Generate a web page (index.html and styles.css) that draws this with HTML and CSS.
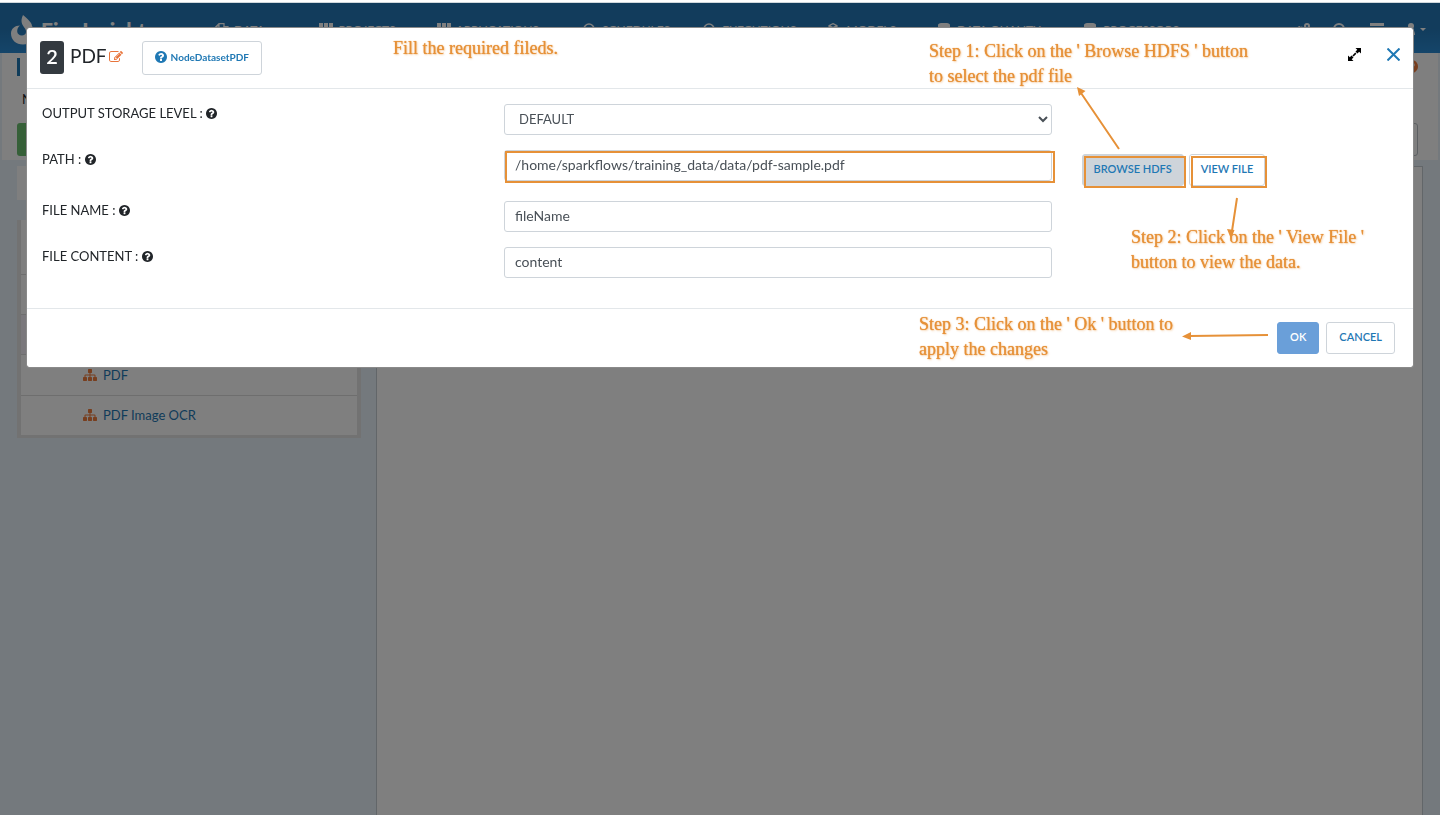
FILE: index.html
```html
<!DOCTYPE html>
<html lang="en">
<head>
<meta charset="utf-8">
<meta name="viewport" content="width=device-width, initial-scale=1">
<title>Fire Insights - PDF node</title>
<link rel="stylesheet" href="styles.css">
</head>
<body>
<svg class="sprite" aria-hidden="true">
  <symbol id="i-help" viewBox="128 128 1536 1536"><path d="M1024 1376v-192q0-14-9-23t-23-9h-192q-14 0-23 9t-9 23v192q0 14 9 23t23 9h192q14 0 23-9t9-23zm256-672q0-88-55.500-163t-138.500-116-170-41q-243 0-371 213-15 24 8 42l132 100q7 6 19 6 16 0 25-12 53-68 86-92 34-24 86-24 48 0 85.500 26t37.500 59q0 38-20 61t-68 45q-63 28-115.500 86.500t-52.500 125.500v36q0 14 9 23t23 9h192q14 0 23-9t9-23q0-19 21.500-49.500t54.500-49.500q32-18 49-28.500t46-35 44.500-48 28-60.500 12.500-81zm384 192q0 209-103 385.500t-279.500 279.500-385.500 103-385.500-103-279.500-279.500-103-385.500 103-385.500 279.500-279.500 385.500-103 385.500 103 279.500 279.500 103 385.500z"/></symbol>
  <symbol id="i-sitemap" viewBox="0 128 1792 1536"><path d="M1792 1248v320q0 40-28 68t-68 28h-320q-40 0-68-28t-28-68v-320q0-40 28-68t68-28h96v-192h-512v192h96q40 0 68 28t28 68v320q0 40-28 68t-68 28h-320q-40 0-68-28t-28-68v-320q0-40 28-68t68-28h96v-192h-512v192h96q40 0 68 28t28 68v320q0 40-28 68t-68 28h-320q-40 0-68-28t-28-68v-320q0-40 28-68t68-28h96v-192q0-52 38-90t90-38h512v-192h-96q-40 0-68-28t-28-68v-320q0-40 28-68t68-28h320q40 0 68 28t28 68v320q0 40-28 68t-68 28h-96v192h512q52 0 90 38t38 90v192h96q40 0 68 28t28 68z"/></symbol>
  <symbol id="i-edit" viewBox="0 128 1792 1408"><path d="M888 1184l116-116-152-152-116 116v56h96v96h56zm440-720q-16-16-33 1l-350 350q-17 17-1 33t33-1l350-350q17-17 1-33zm80 594v190q0 119-84.500 203.500t-203.500 84.500h-832q-119 0-203.500-84.500t-84.500-203.500v-832q0-119 84.500-203.500t203.500-84.500h832q63 0 117 25 15 7 18 23 3 17-9 29l-49 49q-14 14-32 8-23-6-45-6h-832q-66 0-113 47t-47 113v832q0 66 47 113t113 47h832q66 0 113-47t47-113v-126q0-13 9-22l64-64q15-15 35-7t20 29zm-96-738l288 288-672 672h-288v-288zm444 132l-92 92-288-288 92-92q28-28 68-28t68 28l152 152q28 28 28 68t-28 68z"/></symbol>
  <symbol id="i-grid" viewBox="0 0 14 14"><path d="M0 0h4v4H0zM5 0h4v4H5zM10 0h4v4h-4zM0 5h4v4H0zM5 5h4v4H5zM10 5h4v4h-4zM0 10h4v4H0zM5 10h4v4H5zM10 10h4v4h-4z"/></symbol>
  <symbol id="i-ring" viewBox="0 0 14 14"><path fill="none" stroke="currentColor" stroke-width="1.500" d="M6 1a5 5 0 1 0 0 10a5 5 0 1 0 0-10M6 5v3h2"/></symbol>
  <symbol id="i-db" viewBox="0 0 14 14"><path d="M0 2c0-3 12-3 12 0v9c0 3-12 3-12 0z"/></symbol>
  <symbol id="i-cube" viewBox="0 0 14 14"><path fill="none" stroke="currentColor" stroke-width="1.200" d="M5 .600l4 2v4l-4 2-4-2v-4zM1 2.600l4 2 4-2M5 5v4"/></symbol>
  <symbol id="i-copy" viewBox="0 0 14 14"><path fill="none" stroke="currentColor" stroke-width="1.200" d="M4 .600h5v3h4v9H6v-3H.600V4zM4 .600V4H.600M9 3.600L6 7"/></symbol>
</svg>

<div class="app">
  <header class="topbar">
    <a class="brand" href="#">
      <svg class="flame" viewBox="0 0 24 30" aria-hidden="true"><path fill="currentColor" d="M12 0c5 4 9 8 9 11 2 3 3 5 3 8 0 6-5 10.500-12 10.500S0 25 0 18.500c0-5 4-8 9-8-4 3-4 10 2 10 4 0 5-4 3-7-3-4-5-7-2-13.500z"/></svg>
      <span>Fire Insights</span>
    </a>
    <nav class="nav">
      <a href="#"><svg><use href="#i-copy"/></svg>DATA</a>
      <a href="#"><svg><use href="#i-grid"/></svg>PROJECTS</a>
      <a href="#"><svg><use href="#i-grid"/></svg>APPLICATIONS</a>
      <a href="#"><svg><use href="#i-ring"/></svg>SCHEDULES</a>
      <a href="#"><svg><use href="#i-ring"/></svg>EXECUTIONS</a>
      <a href="#"><svg><use href="#i-cube"/></svg>MODELS</a>
      <a href="#"><svg><use href="#i-db"/></svg>DATA QUALITY</a>
      <a href="#"><svg><use href="#i-db"/></svg>PROCESSORS</a>
    </nav>
    <div class="tools">
      <svg viewBox="0 0 14 14"><g fill="none" stroke="currentColor" stroke-width="2"><circle cx="4" cy="7" r="3" stroke-dasharray="2 1"/><circle cx="11" cy="3" r="2"/></g></svg>
      <svg viewBox="0 0 14 14"><circle cx="6" cy="6" r="5" fill="none" stroke="currentColor" stroke-width="2"/></svg>
      <svg viewBox="0 0 14 14"><path d="M0 0h14v3H0zM0 5h14v3H0z"/></svg>
      <svg viewBox="0 0 20 14"><circle cx="4" cy="3" r="3"/><path d="M0 12c0-8 8-8 8 0zM13 5h6l-3 3z"/></svg>
    </div>
  </header>

  <section class="pagehead">
    <div class="headrow">
      <span class="tick"></span>
      <svg class="help-orange"><use href="#i-help"/></svg>
    </div>
    <p class="name">NAME</p>
    <div class="headrow">
      <button class="save" type="button" aria-label="Save"></button>
      <button class="plain" type="button" aria-label="Options"></button>
    </div>
  </section>

  <main class="work">
    <aside class="side">
      <div class="search"></div>
      <div class="tree">
        <div class="group g1"></div>
        <div class="group g2"></div>
        <div class="group g3"></div>
        <a class="leaf" href="#"><svg><use href="#i-sitemap"/></svg>PDF</a>
        <a class="leaf" href="#"><svg><use href="#i-sitemap"/></svg>PDF Image OCR</a>
      </div>
    </aside>
    <div class="canvas"></div>
  </main>
</div>

<div class="backdrop">
  <div class="dialog" role="dialog" aria-labelledby="title">
    <header class="dialog-head">
      <span class="badge">2</span>
      <h1 id="title">PDF</h1>
      <button class="icon-btn edit" type="button" aria-label="Rename"><svg><use href="#i-edit"/></svg></button>
      <a class="btn doc" href="#"><svg><use href="#i-help"/></svg>NodeDatasetPDF</a>
      <div class="window-btns">
        <button class="icon-btn" type="button" aria-label="Expand"><svg class="expand" viewBox="0 0 13 13"><path d="M7.500 0H13v5.500L11.200 3.700 9.400 5.500 7.500 3.600 9.300 1.800zM5.500 13H0V7.500l1.800 1.800 1.800-1.800 1.900 1.900-1.800 1.800zM5.600 6.200l1.600-1.600 1.200 1.200-2.800 2.800-1.200-1.200z"/></svg></button>
        <button class="icon-btn" type="button" aria-label="Close"><svg class="close" viewBox="0 0 13 13"><path d="M.500.500l12 12M12.500.500l-12 12"/></svg></button>
      </div>
    </header>

    <form class="fields">
      <div class="row">
        <label for="storage">OUTPUT STORAGE LEVEL : <svg><use href="#i-help"/></svg></label>
        <div><select id="storage" class="control"><option>DEFAULT</option></select></div>
      </div>
      <div class="row">
        <label for="path">PATH : <svg><use href="#i-help"/></svg></label>
        <div class="marked wide"><input id="path" class="control" type="text" value="/home/sparkflows/training_data/data/pdf-sample.pdf"></div>
        <div class="actions">
          <span class="marked"><button class="btn active" type="button">BROWSE HDFS</button></span>
          <span class="marked"><button class="btn" type="button">VIEW FILE</button></span>
        </div>
      </div>
      <div class="row">
        <label for="fname">FILE NAME : <svg><use href="#i-help"/></svg></label>
        <div><input id="fname" class="control" type="text" value="fileName"></div>
      </div>
      <div class="row">
        <label for="fcontent">FILE CONTENT : <svg><use href="#i-help"/></svg></label>
        <div><input id="fcontent" class="control" type="text" value="content"></div>
      </div>
    </form>

    <footer class="dialog-foot">
      <button class="btn ok" type="button">OK</button>
      <button class="btn" type="button">CANCEL</button>
    </footer>

    <!-- Tutorial call-outs drawn over the dialog -->
    <p class="note n0">Fill the required fileds.</p>
    <p class="note n1">Step 1: Click on the ' Browse HDFS ' button<br>to select the pdf file</p>
    <p class="note n2">Step 2: Click on the ' View File '<br>button to view the data.</p>
    <p class="note n3">Step 3: Click on the ' Ok ' button to<br>apply the changes</p>
    <svg class="arrows" viewBox="0 0 360 340" aria-hidden="true">
      <g stroke="currentColor" stroke-width="2" fill="none"><path d="M66 121L28 65M184 170l-5 33M215 307l-78 1"/></g>
      <path fill="currentColor" d="M24 59l8.500 4-6.500 5zM178 211l-4-10 7.500 1zM129 308.500l9-4.500v8z"/>
    </svg>
  </div>
</div>
</body>
</html>
```
FILE: styles.css
```css
* { box-sizing: border-box; }

body {
  margin: 0;
  font: 13px/20px Lato, "Open Sans", sans-serif;
  color: #212529;
  overflow: hidden;
}

a { color: #1f78b4; text-decoration: none; }
svg { fill: currentColor; }
.sprite { position: absolute; width: 0; height: 0; }

/* Application shell */
.app {
  min-height: 100vh;
  display: flex;
  flex-direction: column;
  background: #e9f3fa;
  border-top: 2px solid #fff;
}

.topbar {
  display: grid;
  grid-template-columns: 204px 975fr 261fr;
  align-items: start;
  height: 51px;
  padding-top: 12px;
  color: #fff;
  border-top: 1px solid #d0d8dd;
  background: linear-gradient(#2478b8 50%, #2a8bd4);
}

.brand {
  display: flex;
  gap: 6px;
  padding-left: 11px;
  color: #fff;
  font-size: 21px;
  font-weight: 900;
  line-height: 29px;
  white-space: nowrap;
}
.flame { width: 24px; height: 30px; }

.nav {
  display: grid;
  grid-template-columns: 105fr 118fr 147fr 121fr 125fr 111fr 147fr 90fr;
  padding: 8px 0 0 11px;
}
.nav a {
  display: flex;
  gap: 5px;
  color: #fff;
  font-size: 12px;
  line-height: 14px;
  white-space: nowrap;
}
.nav svg { width: 14px; height: 14px; }

.tools {
  display: flex;
  justify-content: flex-end;
  gap: 23px;
  padding: 8px 13px 0 0;
}
.tools svg { width: 14px; height: 14px; }
.tools svg:last-child { width: 20px; }

.pagehead {
  margin: 0 2px;
  padding: 5px 20px 0 15px;
  height: 107px;
  background: #fff;
}
.headrow { display: flex; justify-content: space-between; }
.tick { width: 3px; height: 18px; background: #1f78b4; }
.help-orange { width: 13px; height: 13px; margin: 2px 0; color: #f07c3c; }
.name { margin: 13px 5px 14px; }
.save, .plain { width: 60px; height: 33px; border-radius: 3px; }
.save { border: 0; background: #6cc070; }
.plain { border: 1px solid #b8bec4; background: #fff; }

.work {
  flex: 1;
  display: grid;
  grid-template-columns: 344px 1fr;
  gap: 15px;
  padding: 6px 17px 0;
}
.search { height: 34px; background: #fff; margin-bottom: 20px; }
.tree {
  border: 4px solid #e4e4e4;
  border-top: 0;
  border-bottom-width: 3px;
  background: #fff;
}
.group { border-bottom: 1px solid #ddd; height: 40px; }
.g1 { height: 55px; }
.g3 { background: #f4f0f8; }
.leaf {
  display: flex;
  align-items: center;
  gap: 6px;
  height: 40px;
  padding: 0 0 1px 62px;
  font-size: 13px;
}
.leaf + .leaf { border-top: 1px solid #ddd; }
.leaf svg { width: 14px; height: 12px; color: #f07c3c; }
.canvas { border: 1px solid #c4ccd2; border-bottom: 0; background: #fff; }

/* Dialog */
.backdrop {
  position: fixed;
  inset: 3px 0 0;
  padding: 24px 26px;
  background: rgba(0, 0, 0, .5);
}
.dialog {
  position: relative;
  background: #fff;
  border: 1px solid #8a8a8a;
  border-radius: 3px;
  background-clip: padding-box;
}

.dialog-head {
  display: flex;
  height: 61px;
  padding: 13px;
  border-bottom: 1px solid #e3e7ea;
}
.badge {
  width: 24px;
  height: 33px;
  border-radius: 3px;
  background: #343a40;
  color: #fff;
  font-size: 20px;
  font-weight: 600;
  line-height: 30px;
  text-align: center;
}
h1 {
  margin: 0 2px 0 6px;
  font-size: 19px;
  font-weight: 400;
  line-height: 30px;
}
.icon-btn { padding: 0; border: 0; background: none; color: #000; }
.icon-btn svg { display: block; width: 13px; height: 13px; }
.edit { padding-bottom: 3px; color: #e8743b; }
.icon-btn.edit svg { width: 14px; height: 11px; }
.window-btns {
  display: flex;
  gap: 26px;
  align-items: flex-start;
  margin: 7px 0 0 auto;
}
.close { stroke: #1f78b4; stroke-width: 2; }

.btn {
  height: 32px;
  padding: 0 12px 3px;
  border: 1px solid #ced4da;
  border-radius: 3px;
  background: #fff;
  color: #1f78b4;
  font: 600 11px/16px Lato, sans-serif;
  white-space: nowrap;
}
.btn.doc {
  display: flex;
  align-items: center;
  gap: 4px;
  height: 34px;
  margin-left: 19px;
  padding: 0 12px 2px;
  font-size: 10px;
  font-weight: 700;
}
.doc svg { width: 12px; height: 12px; }
.actions .btn { padding: 0 11px 3px; }
.btn.active { background: #ced4da; }
.btn.ok { border-color: #6a9fd9; background: #6a9fd9; color: #fff; }

.fields {
  display: grid;
  gap: 15px;
  padding: 15px 0 30px;
}
.row { display: grid; grid-template-columns: 4fr 5fr 3fr; }
.row > * { margin: 0 15px; }
.row label { line-height: 18px; }
label svg { width: 11px; height: 11px; vertical-align: -1px; }
.control {
  display: block;
  width: 100%;
  height: 31px;
  padding: 0 10px 2px;
  border: 1px solid #ced4da;
  border-radius: 3px;
  background: #fff;
  color: #495057;
  font: 14px/20px Lato, sans-serif;
}
select.control { font-size: 13px; }

.actions { display: flex; gap: 5px; padding-top: 4px; }
.marked { position: relative; }
.marked::after {
  content: "";
  position: absolute;
  inset: 2px -2px -2px 2px;
  border: 2px solid #e69138;
  pointer-events: none;
}
.wide { height: 31px; }
.wide::after { inset: 1px -3px -2px 1px; }

.dialog-foot {
  display: flex;
  justify-content: flex-end;
  gap: 7px;
  padding: 13px 18px;
  border-top: 1px solid #e3e7ea;
}

/* Call-outs */
.note {
  position: absolute;
  margin: 0;
  color: #e69138;
  font: 18px/25px "Liberation Serif", serif;
  text-shadow: 0 0 1px #e69138, 1px 1px 2px #e6913866;
  white-space: nowrap;
}
.n0 { left: 366px; top: 8px; }
.n1 { left: calc(100% - 484px); top: 11px; }
.n2 { left: calc(100% - 282px); top: 197px; }
.n3 { left: calc(100% - 494px); top: 284px; }
.arrows {
  position: absolute;
  top: 0;
  right: 0;
  width: 360px;
  height: 340px;
  color: #e69138;
  pointer-events: none;
}
```
